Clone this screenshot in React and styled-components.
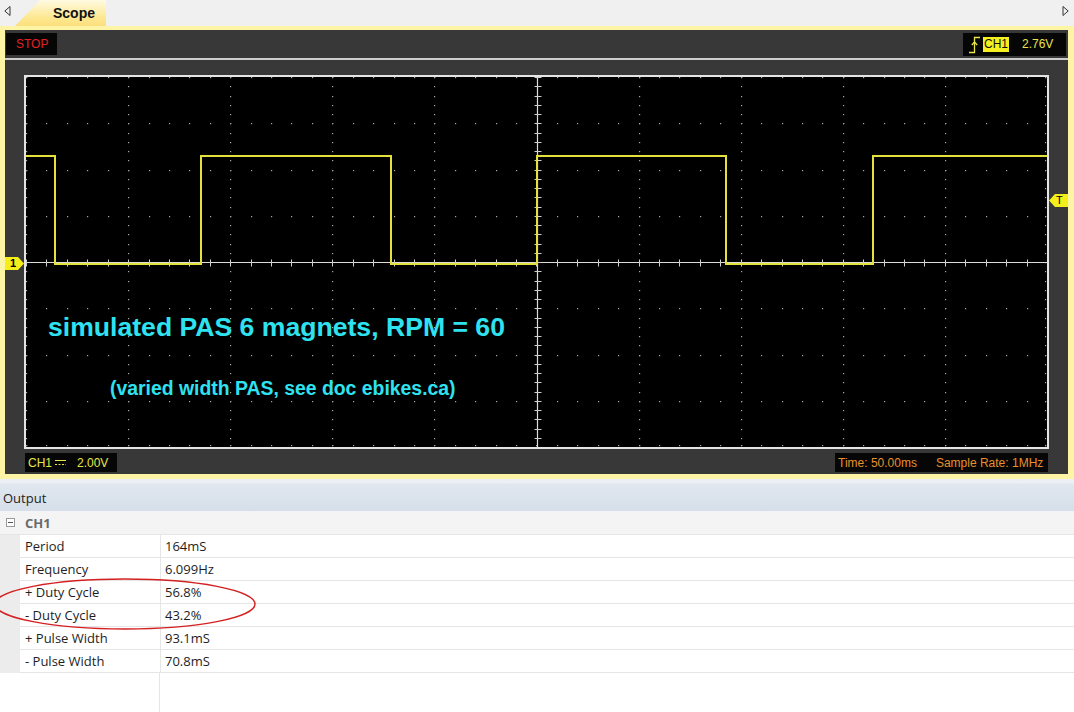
import React from "react";
import styled, { createGlobalStyle } from "styled-components";

const GlobalStyle = createGlobalStyle`
  html, body { margin: 0; padding: 0; background: #fff; }
  body { font-family: "Open Sans", "Noto Sans", sans-serif; overflow: hidden; }
`;

const PW = 1021;
const PH = 370;
const DX = PW / 10;
const DY = PH / 8;

const rows = [
  ["Period", "164mS"],
  ["Frequency", "6.099Hz"],
  ["+ Duty Cycle", "56.8%"],
  ["- Duty Cycle", "43.2%"],
  ["+ Pulse Width", "93.1mS"],
  ["- Pulse Width", "70.8mS"],
];

function Grid() {
  const dots = [];
  for (let k = 0; k <= 10; k++) {
    if (k === 5) continue;
    for (let j = 0; j <= 40; j++) {
      dots.push([k * DX, j * (DY / 5)]);
    }
  }
  for (let m = 0; m <= 8; m++) {
    if (m === 4) continue;
    for (let i = 0; i <= 50; i++) {
      dots.push([i * (DX / 5), m * DY]);
    }
  }
  const vt = [];
  for (let j = 0; j <= 40; j++) vt.push(j * (DY / 5));
  const ht = [];
  for (let i = 0; i <= 50; i++) ht.push(i * (DX / 5));
  const cx = Math.round(PW / 2) + 0.5;
  const cy = Math.round(PH / 2) + 0.5;
  return (
    <svg width={PW} height={PH} style={{ display: "block" }}>
      {dots.map(([x, y], n) => (
        <rect key={n} x={Math.min(Math.round(x), PW - 2)} y={Math.min(Math.round(y), PH - 2)} width="1.2" height="1.2" fill="#a8a8a8" />
      ))}
      <line x1={cx} y1="0" x2={cx} y2={PH} stroke="#dcdcdc" strokeWidth="1.2" />
      <line x1="0" y1={cy} x2={PW} y2={cy} stroke="#dcdcdc" strokeWidth="1.2" />
      {vt.map((y, n) => (
        <line key={"v" + n} x1={cx - 3} x2={cx + 4} y1={Math.round(y) + 0.5} y2={Math.round(y) + 0.5} stroke="#d0d0d0" />
      ))}
      {ht.map((x, n) => (
        <line key={"h" + n} y1={cy - 3} y2={cy + 4} x1={Math.round(x) + 0.5} x2={Math.round(x) + 0.5} stroke="#d0d0d0" />
      ))}
      <path
        d="M0 79 H29 V187 H175 V79 H365 V187 H511 V79 H700 V187 H847 V79 H1021"
        fill="none"
        stroke="#e4e03c"
        strokeWidth="2"
      />
    </svg>
  );
}

function TriggerEdge() {
  return (
    <svg width="13" height="19" viewBox="0 0 13 19">
      <path d="M1 17.5 H6.5 V2.5 H12" fill="none" stroke="#e8e44a" strokeWidth="1.3" />
      <path d="M3.8 10 L6.5 7 L9.2 10" fill="none" stroke="#e8e44a" strokeWidth="1.3" />
    </svg>
  );
}

function DcSign() {
  return (
    <svg width="11" height="8" viewBox="0 0 11 8">
      <line x1="0" y1="1.5" x2="11" y2="1.5" stroke="#e6e64a" strokeWidth="1" />
      <line x1="0" y1="5.5" x2="11" y2="5.5" stroke="#e6e64a" strokeWidth="1" strokeDasharray="2 1.5" />
    </svg>
  );
}

export default function App() {
  return (
    <Page>
      <GlobalStyle />
      <TabBar>
        <ScrollArrow>
          <svg width="7" height="10" viewBox="0 0 7 10">
            <polygon points="6,0.5 6,9.5 0.8,5" fill="none" stroke="#333" strokeWidth="1" />
          </svg>
        </ScrollArrow>
        <Tab>Scope</Tab>
        <Spacer />
        <ScrollArrow $right>
          <svg width="7" height="10" viewBox="0 0 7 10">
            <polygon points="1,0.5 1,9.5 6.2,5" fill="none" stroke="#333" strokeWidth="1" />
          </svg>
        </ScrollArrow>
      </TabBar>

      <ScopeFrame>
        <ScopePanel>
          <TopBar>
            <StopBox>STOP</StopBox>
            <TriggerBox>
              <TriggerEdge />
              <ChannelTag>CH1</ChannelTag>
              <TrigLevel>2.76V</TrigLevel>
            </TriggerBox>
          </TopBar>
          <Separator />
          <PlotRow>
            <MarkerCol>
              <LevelMarker $top={182}>1</LevelMarker>
            </MarkerCol>
            <PlotFrame>
              <Grid />
              <Annotation $size={26.6} $left={22} $top={235}>
                simulated PAS 6 magnets, RPM = 60
              </Annotation>
              <Annotation $size={19.4} $left={84} $top={300}>
                (varied width PAS, see doc ebikes.ca)
              </Annotation>
            </PlotFrame>
            <MarkerCol>
              <TriggerMarker $top={119}>T</TriggerMarker>
            </MarkerCol>
          </PlotRow>
          <StatusRow>
            <ChBox>
              <span>CH1</span>
              <DcSign />
              <span style={{ marginLeft: 8 }}>2.00V</span>
            </ChBox>
            <TimeBox>
              <span>Time: 50.00ms</span>
              <span>Sample Rate: 1MHz</span>
            </TimeBox>
          </StatusRow>
        </ScopePanel>
      </ScopeFrame>

      <OutputSection>
        <OutputHeader>Output</OutputHeader>
        <GroupRow>
          <Collapse />
          <GroupName>CH1</GroupName>
        </GroupRow>
        {rows.map(([k, v]) => (
          <Row key={k}>
            <Gutter />
            <Label>{k}</Label>
            <Value>{v}</Value>
          </Row>
        ))}
        <Filler>
          <div />
          <div />
        </Filler>
        <Circle width="270" height="62" viewBox="0 0 270 62">
          <ellipse cx="131" cy="31" rx="130" ry="25" fill="none" stroke="#d42020" strokeWidth="1.4" />
        </Circle>
      </OutputSection>
    </Page>
  );
}

const Page = styled.div`
  width: 1074px;
  height: 712px;
  display: flex;
  flex-direction: column;
  overflow: hidden;
`;

const TabBar = styled.div`
  height: 26px;
  display: flex;
  align-items: stretch;
  background: #f0f0f0;
`;

const ScrollArrow = styled.div`
  width: ${(p) => (p.$right ? "18px" : "15px")};
  display: flex;
  justify-content: center;
  padding-top: 6px;
  box-sizing: border-box;
`;

const Spacer = styled.div`
  flex: 1;
`;

const Tab = styled.div`
  width: 91px;
  padding-left: 38px;
  box-sizing: border-box;
  display: flex;
  align-items: center;
  font-family: "Liberation Sans", Arial, sans-serif;
  font-weight: bold;
  font-size: 14px;
  color: #111;
  clip-path: polygon(0 100%, 25px 0, 100% 0, 100% 100%);
  background: linear-gradient(to bottom, #fffbe2, #fde78f 70%, #fcdf7c);
`;

const ScopeFrame = styled.div`
  background: #fdf4a6;
  padding: 4px 6px 5px 5px;
`;

const ScopePanel = styled.div`
  background: #383838;
  display: flex;
  flex-direction: column;
  font-family: "Liberation Sans", Arial, sans-serif;
  font-size: 12px;
`;

const TopBar = styled.div`
  height: 28px;
  display: flex;
  align-items: center;
  justify-content: space-between;
  padding: 0 2px 0 1px;
`;

const StopBox = styled.div`
  width: 51px;
  height: 22px;
  box-sizing: border-box;
  padding-left: 10px;
  display: flex;
  align-items: center;
  background: #060606;
  color: #e02222;
`;

const TriggerBox = styled.div`
  width: 103px;
  height: 23px;
  box-sizing: border-box;
  padding-left: 5px;
  display: flex;
  align-items: center;
  background: #060606;
`;

const ChannelTag = styled.span`
  background: #f6f020;
  color: #111;
  padding: 1px 1px;
  margin-left: 2px;
  line-height: 13px;
`;

const TrigLevel = styled.span`
  color: #e8e44a;
  margin-left: 13px;
`;

const Separator = styled.div`
  height: 2px;
  background: #cdcdcd;
`;

const PlotRow = styled.div`
  display: grid;
  grid-template-columns: 19px 1025px 19px;
  padding-top: 15px;
`;

const MarkerCol = styled.div`
  position: relative;
`;

const LevelMarker = styled.div`
  position: absolute;
  left: 0;
  top: ${(p) => p.$top}px;
  width: 19px;
  height: 13px;
  background: #f4ee1a;
  clip-path: polygon(0 0, 13px 0, 19px 50%, 13px 100%, 0 100%);
  color: #000;
  font-weight: bold;
  font-size: 11px;
  line-height: 13px;
  padding-left: 5px;
  box-sizing: border-box;
`;

const TriggerMarker = styled.div`
  position: absolute;
  right: 0;
  top: ${(p) => p.$top}px;
  width: 19px;
  height: 13px;
  background: #f4ee1a;
  clip-path: polygon(6px 0, 100% 0, 100% 100%, 6px 100%, 0 50%);
  color: #000;
  font-size: 11px;
  line-height: 13px;
  padding-left: 7px;
  box-sizing: border-box;
`;

const PlotFrame = styled.div`
  position: relative;
  width: 1025px;
  height: 374px;
  box-sizing: border-box;
  border: 2px solid #e4e4e4;
  background: #000;
`;

const Annotation = styled.div`
  position: absolute;
  left: ${(p) => p.$left}px;
  top: ${(p) => p.$top}px;
  font-family: "Liberation Sans", Arial, sans-serif;
  font-weight: bold;
  font-size: ${(p) => p.$size}px;
  line-height: ${(p) => Math.round(p.$size + 4)}px;
  color: #2fe2f0;
  white-space: nowrap;
`;

const StatusRow = styled.div`
  display: flex;
  justify-content: space-between;
  padding: 4px 20px 2px 20px;
`;

const ChBox = styled.div`
  width: 92px;
  height: 19px;
  box-sizing: border-box;
  padding-left: 3px;
  display: flex;
  align-items: center;
  gap: 3px;
  background: #060606;
  color: #e6e64a;
`;

const TimeBox = styled.div`
  width: 213px;
  height: 19px;
  box-sizing: border-box;
  padding-left: 3px;
  display: flex;
  align-items: center;
  gap: 19px;
  background: #060606;
  color: #e8902c;
`;

const OutputSection = styled.div`
  position: relative;
  flex: 1;
  display: flex;
  flex-direction: column;
  font-size: 13px;
  color: #1e1e1e;
`;

const OutputHeader = styled.div`
  height: 32px;
  box-sizing: border-box;
  padding: 6px 0 0 3px;
  display: flex;
  align-items: center;
  background: linear-gradient(to bottom, #eceff3 0, #eceff3 4px, #e0e7ef 5px, #d6dfe9 100%);
  color: #222;
`;

const GroupRow = styled.div`
  height: 24px;
  box-sizing: border-box;
  display: flex;
  align-items: center;
  background: #f4f4f4;
  border-bottom: 1px solid #e6e6e6;
`;

const Collapse = styled.div`
  position: relative;
  width: 9px;
  height: 9px;
  margin-left: 6px;
  box-sizing: border-box;
  border: 1px solid #9a9a9a;
  background: #fff;
  &::after {
    content: "";
    position: absolute;
    left: 1px;
    right: 1px;
    top: 3px;
    height: 1px;
    background: #555;
  }
`;

const GroupName = styled.span`
  margin-left: 10px;
  font-weight: bold;
  color: #6a6a6a;
`;

const Row = styled.div`
  display: grid;
  grid-template-columns: 20px 140px 1fr;
  height: 23px;
`;

const Gutter = styled.div`
  background: #ececec;
`;

const Label = styled.div`
  padding-left: 5px;
  display: flex;
  align-items: center;
  border-bottom: 1px solid #e6e6e6;
`;

const Value = styled.div`
  padding-left: 4px;
  display: flex;
  align-items: center;
  border-left: 1px solid #e6e6e6;
  border-bottom: 1px solid #e6e6e6;
`;

const Filler = styled.div`
  flex: 1;
  display: grid;
  grid-template-columns: 160px 1fr;
  & > div:first-child {
    border-right: 1px solid #e6e6e6;
  }
`;

const Circle = styled.svg`
  position: absolute;
  left: -6px;
  top: 94px;
  pointer-events: none;
`;
